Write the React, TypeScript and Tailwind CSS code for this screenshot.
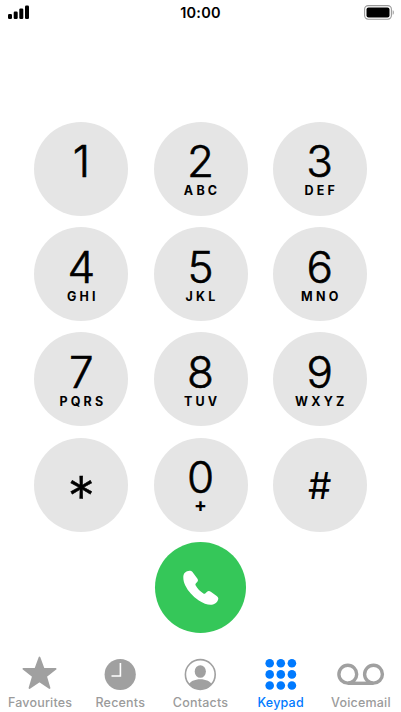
import React from "react";

type Key = { symbol: string; letters?: string };

const keys: Key[] = [
  { symbol: "1" },
  { symbol: "2", letters: "ABC" },
  { symbol: "3", letters: "DEF" },
  { symbol: "4", letters: "GHI" },
  { symbol: "5", letters: "JKL" },
  { symbol: "6", letters: "MNO" },
  { symbol: "7", letters: "PQRS" },
  { symbol: "8", letters: "TUV" },
  { symbol: "9", letters: "WXYZ" },
  { symbol: "*" },
  { symbol: "0", letters: "+" },
  { symbol: "#" },
];

function StatusBar() {
  return (
    <header className="flex h-[26px] items-start justify-between pl-2 pr-[7px]">
      <svg className="mt-[5px] h-[14px] w-[60px]" viewBox="0 0 60 14">
        <rect x="0" y="9" width="4" height="5" rx="1.2" />
        <rect x="5.7" y="6.5" width="4" height="7.5" rx="1.2" />
        <rect x="11.3" y="3.6" width="4" height="10.4" rx="1.2" />
        <rect x="17" y="0.6" width="4" height="13.4" rx="1.2" />
      </svg>
      <time className="mt-[3px] -ml-px text-[14.5px] leading-5 font-semibold tracking-[0.2px]">10:00</time>
      <svg className="mt-[5px] h-[15px] w-[60px]" viewBox="0 0 60 15">
        <rect x="30.6" y="0.6" width="26.8" height="13.6" rx="3.6" fill="none" stroke="#999" strokeWidth="1.1" />
        <rect x="32.5" y="2.4" width="23" height="10" rx="2" />
        <path d="M58.7 5.2c1.5.5 1.5 4 0 4.5z" fill="#999" />
      </svg>
    </header>
  );
}

function KeyButton({ symbol, letters }: Key) {
  if (symbol === "*")
    return (
      <button className="flex size-[94px] justify-center rounded-full bg-[#e5e5e5] pt-[30px] text-[55px] leading-[56px] font-light [-webkit-text-stroke:0.5px_black]">
        *
      </button>
    );
  if (symbol === "#")
    return (
      <button className="flex size-[94px] justify-center rounded-full bg-[#e5e5e5] pt-[28px] text-[37px] leading-[40px]">
        #
      </button>
    );
  return (
    <button className="flex size-[94px] flex-col items-center rounded-full bg-[#e5e5e5] pt-[17.6px]">
      <span className="text-[44px] leading-[44px] font-light [-webkit-text-stroke:0.6px_black]">{symbol}</span>
      {letters === "+" ? (
        <span className="text-[19px] leading-[14px] font-bold">+</span>
      ) : (
        <span className="mt-px pl-[3.2px] text-[12.5px] leading-[14px] font-bold tracking-[3.2px]">{letters}</span>
      )}
    </button>
  );
}

function StarIcon() {
  return (
    <svg className="h-9 w-10" viewBox="0 0 40 36" fill="#a0a0a0" stroke="#a0a0a0" strokeWidth="1.8" strokeLinejoin="round">
      <path d="M19.500 2.500l4.100 11.200 12 .2-9.500 7.500 3.400 11.600-10-6.800-10 6.800 3.400-11.600L3.400 13.900l12-.2z" />
    </svg>
  );
}

function ClockIcon() {
  return (
    <svg className="h-9 w-10" viewBox="0 0 40 36">
      <circle cx="20.2" cy="19.5" r="15.6" fill="#a0a0a0" />
      <path d="M20.4 8v13H11.5" fill="none" stroke="#fff" strokeWidth="1.6" />
    </svg>
  );
}

function PersonIcon() {
  return (
    <svg className="h-9 w-10" viewBox="0 0 40 36">
      <clipPath id="face">
        <circle cx="20.3" cy="19.5" r="15" />
      </clipPath>
      <circle cx="20.3" cy="19.5" r="14.9" fill="none" stroke="#a0a0a0" strokeWidth="1.6" />
      <g fill="#a0a0a0" clipPath="url(#face)">
        <ellipse cx="20.3" cy="16.5" rx="5.6" ry="6.3" />
        <path d="M8 31c1.500-4.700 7-6.700 12.300-6.700S31.100 26.300 32.600 31L28 35H12z" />
      </g>
    </svg>
  );
}

function GridIcon() {
  const at = [8.3, 19.4, 30.5];
  return (
    <svg className="h-9 w-10" viewBox="0 0 40 36" fill="#007aff">
      {at.map((y) => at.map((x) => <circle key={`${x}-${y}`} cx={x + 0.4} cy={y} r="4.3" />))}
    </svg>
  );
}

function VoicemailIcon() {
  return (
    <svg className="h-9 w-12" viewBox="0 0 48 36" fill="none" stroke="#a0a0a0" strokeWidth="3.4">
      <circle cx="10.8" cy="19.2" r="8.9" />
      <circle cx="36.500" cy="19.2" r="8.9" />
      <path d="M10.800 28.300h25.700" />
    </svg>
  );
}

const tabs = [
  { label: "Favourites", icon: <StarIcon /> },
  { label: "Recents", icon: <ClockIcon /> },
  { label: "Contacts", icon: <PersonIcon /> },
  { label: "Keypad", icon: <GridIcon />, active: true },
  { label: "Voicemail", icon: <VoicemailIcon /> },
];

export default function App() {
  return (
    <div className="flex h-[712px] w-[401px] flex-col overflow-hidden bg-white font-['Inter','Liberation_Sans',sans-serif] text-black">
      <StatusBar />
      <main className="flex flex-col items-center pt-[95.7px]">
        <div className="grid grid-cols-3 gap-x-[25.2px] gap-y-[11.3px]">
          {keys.map((k) => (
            <KeyButton key={k.symbol} {...k} />
          ))}
        </div>
        <button className="mt-[10.8px] flex size-[90.5px] items-center justify-center rounded-full bg-[#35c759]">
          <svg className="size-[36px]" viewBox="0 0 36 36" fill="#fff">
            <path d="M1.600 3C3.200 1.400 5.300.5 7.200.7c1.400.2 2.300 1.200 3.200 2.500l3.900 5.200c1 1.500.8 2.600-.2 3.700l-1.300 1.500c-.5.600-.5 1.200-.1 1.900 1.700 3 4.600 6 7.700 8 .7.400 1.300.4 1.800-.1l1.600-1.500c1.200-1.100 2.500-1.200 4-.2l5.200 3.700c1.400 1 2.300 1.900 2.300 3.200 0 1.800-1.300 3.700-3.200 5-3.600 2.400-9.800 1.300-16.300-3C9.700 26.600 5 21.200 2.300 15.600.1 10.800-.5 5.400 1.600 3z" />
          </svg>
        </button>
      </main>
      <nav className="mt-auto grid h-[57px] grid-cols-5">
        {tabs.map((t) => (
          <a key={t.label} className={`flex flex-col items-center ${t.active ? "text-[#007aff]" : "text-[#9b9b9b]"}`}>
            {t.icon}
            <span className="mt-1 text-[12.5px] leading-4 font-medium tracking-[0.2px]">{t.label}</span>
          </a>
        ))}
      </nav>
    </div>
  );
}
